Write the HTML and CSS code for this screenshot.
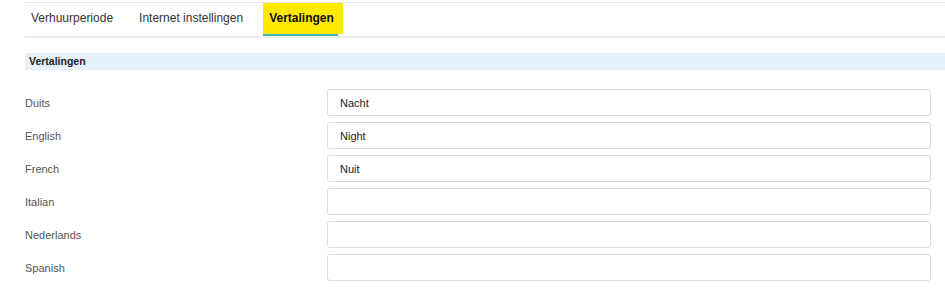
FILE: index.html
```html
<!DOCTYPE html>
<html lang="nl">
<head>
  <meta charset="UTF-8" />
  <title>Vertalingen</title>
  <link rel="stylesheet" href="styles.css">
</head>
<body>
  <div class="page">
    <div class="tabs">
      <div class="tab">Verhuurperiode</div>
      <div class="tab">Internet instellingen</div>
      <div class="tab active">Vertalingen</div>
    </div>

    <div class="section-title">Vertalingen</div>

    <div class="form">
      <div class="row">
        <label for="duits">Duits</label>
        <input type="text" id="duits" value="Nacht" />
      </div>
      <div class="row">
        <label for="english">English</label>
        <input type="text" id="english" value="Night" />
      </div>
      <div class="row">
        <label for="french">French</label>
        <input type="text" id="french" value="Nuit" />
      </div>
      <div class="row">
        <label for="italian">Italian</label>
        <input type="text" id="italian" />
      </div>
      <div class="row">
        <label for="nederlands">Nederlands</label>
        <input type="text" id="nederlands" />
      </div>
      <div class="row">
        <label for="spanish">Spanish</label>
        <input type="text" id="spanish" />
      </div>
    </div>
  </div>
</body>
</html>
```

FILE: styles.css
```css
body {
  margin: 0;
  font-family: 'Liberation Sans', Arial, sans-serif;
  background: #fff;
  color: #222;
}

.page {
  padding: 2px 0 0 25px;
}

.tabs {
  display: flex;
  gap: 14px;
  border-top: 1px solid #e6e6e6;
  border-bottom: 2px solid #ececec;
}

.tab {
  height: 33px;
  line-height: 31px;
  padding: 0 6px;
  font-size: 12px;
  color: #333;
}

.tab.active {
  padding-right: 9px;
  font-weight: bold;
  color: #111;
  background:
    linear-gradient(#ffe900, #ffe900) left top / 100% 31px no-repeat,
    linear-gradient(#3fb5b1, #3fb5b1) left bottom / calc(100% - 5px) 2px no-repeat;
}

.section-title {
  margin-top: 15px;
  height: 17px;
  line-height: 17px;
  padding-left: 4px;
  background: #e6f0f8;
  font-size: 10.5px;
  font-weight: bold;
  color: #222;
}

.form {
  display: flex;
  flex-direction: column;
  gap: 6px;
  margin-top: 19px;
  padding-right: 14px;
}

.row {
  display: flex;
  align-items: center;
}

.row label {
  width: 302px;
  font-size: 11px;
  color: #555;
}

.row input {
  flex: 1;
  height: 27px;
  box-sizing: border-box;
  padding: 0 12px;
  border: 1px solid #dcdcdc;
  border-radius: 3px;
  font-family: inherit;
  font-size: 11px;
  color: #222;
  background: #fff;
}
```
